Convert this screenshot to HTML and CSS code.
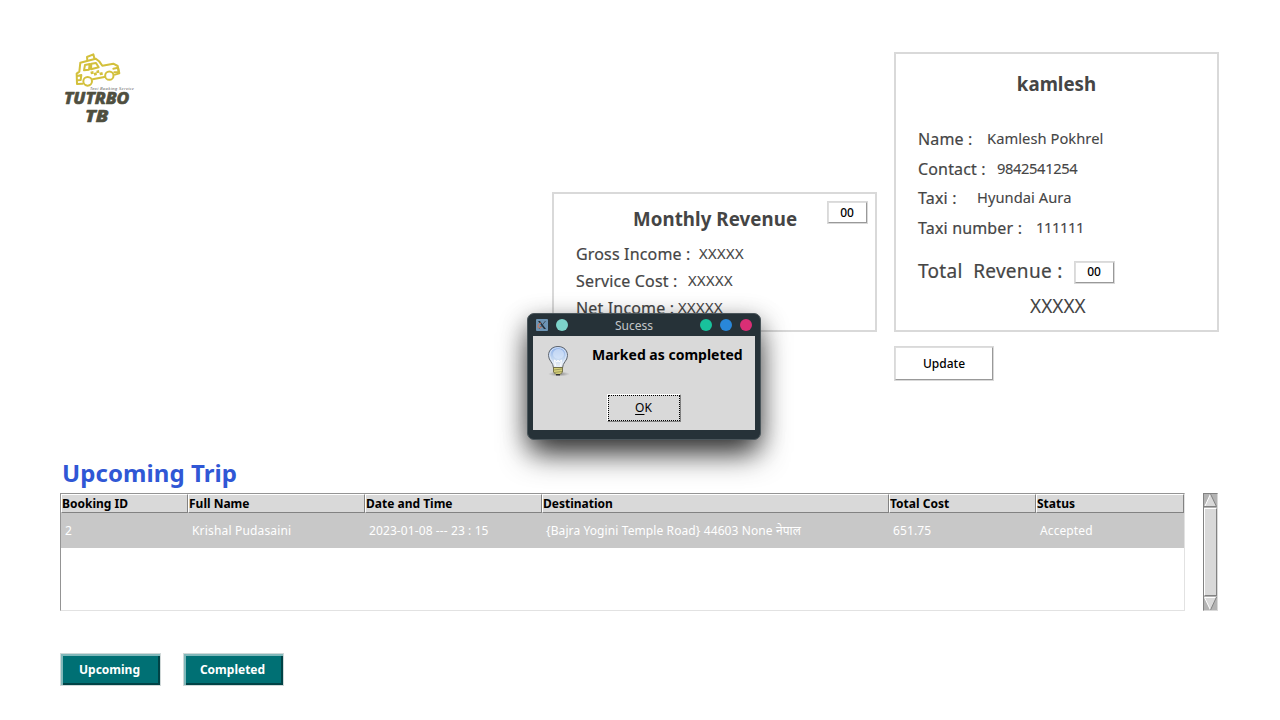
FILE: index.html
```html
<!DOCTYPE html>
<html lang="en">
<head>
<meta charset="utf-8">
<title>Tutrbo TB</title>
<link rel="stylesheet" href="styles.css">
</head>
<body>
<main class="app">
  <header class="top">
    <svg class="logo" viewBox="30 15 240 240">
      <g fill="none" stroke="#d3c03c" stroke-width="6" stroke-linejoin="round" stroke-linecap="round">
        <path d="M112 61L111 51L130 43L133 55"/>
        <path d="M98 131L81 132L80 101L88 95L91 68L137 56Q148 62 157 77L190 71L203 78L208 100L195 104"/>
        <path d="M105 75L102 91L117 89L119 72ZM124 71L138 69L146 82L123 88Z"/>
        <path d="M82 108L94 105L92 120L82 121M190 86L204 83L206 96L193 97M128 118L163 111"/>
        <circle cx="113" cy="124" r="13"/>
        <circle cx="178" cy="107" r="12.500"/>
      </g>
      <path fill="#d3c03c" d="M121 95l9-2 1 8-8 2zM131 99l8-2 2 8-8 2zM139 92l8-2 1 8-8 2zM148 98l9-2 2 8-9 2z"/>
      <text class="logo-tag" x="120" y="151" textLength="132">Taxi Booking Service</text>
      <text class="logo-name" x="42" y="192" textLength="196" lengthAdjust="spacingAndGlyphs">TUTRBO</text>
      <text class="logo-name" x="105" y="245" textLength="70" lengthAdjust="spacingAndGlyphs">TB</text>
    </svg>
    <section class="card revenue">
      <div class="revenue-head"><h2>Monthly Revenue</h2><button class="tk small">00</button></div>
      <div class="row"><span class="label w-gross">Gross Income :</span><span class="value masked">XXXXX</span></div>
      <div class="row"><span class="label w-service">Service Cost :</span><span class="value masked">XXXXX</span></div>
      <div class="row"><span class="label w-net">Net Income :</span><span class="value masked">XXXXX</span></div>
    </section>
    <div class="side">
      <section class="card profile">
        <h2>kamlesh</h2>
        <div class="row"><span class="label w-name">Name :</span><span class="value">Kamlesh Pokhrel</span></div>
        <div class="row"><span class="label w-contact">Contact :</span><span class="value digits">9842541254</span></div>
        <div class="row"><span class="label w-taxi">Taxi :</span><span class="value">Hyundai Aura</span></div>
        <div class="row"><span class="label w-number">Taxi number :</span><span class="value digits">111111</span></div>
        <div class="total"><span class="total-label">Total&nbsp; Revenue :</span><button class="tk small">00</button></div>
        <div class="total-value">XXXXX</div>
      </section>
      <button class="tk update">Update</button>
    </div>
  </header>
  <h1>Upcoming Trip</h1>
  <section class="trips">
    <div class="table">
      <div class="line head"><span>Booking ID</span><span>Full Name</span><span>Date and Time</span><span>Destination</span><span>Total Cost</span><span>Status</span></div>
      <div class="line item"><span>2</span><span class="name">Krishal Pudasaini</span><span>2023-01-08 --- 23 : 15</span><span>{Bajra Yogini Temple Road} 44603 None नेपाल</span><span>651.75</span><span>Accepted</span></div>
    </div>
    <div class="scroll">
      <svg width="13" height="13" viewBox="0 0 13 13"><path d="M6.5 0L1 12H12Z" fill="#d9d9d9"/><path d="M6.5 0L1 12" stroke="#fff"/><path d="M6.5 0L12.5 12.5H0" fill="none" stroke="#828282"/></svg>
      <div class="thumb"></div>
      <svg width="13" height="13" viewBox="0 0 13 13"><path d="M6.5 13L1 1H12Z" fill="#d9d9d9"/><path d="M12 .5H.5L6.5 13" fill="none" stroke="#fff"/><path d="M6.5 13L12.5 0" stroke="#828282"/></svg>
    </div>
  </section>
  <nav class="tabs"><button>Upcoming</button><button>Completed</button></nav>
</main>
<div class="dialog">
  <div class="title">
    <svg width="12" height="12" viewBox="0 0 12 12"><rect width="12" height="12" rx="1" fill="#6c94b4"/><path d="M2 2H4L10 10H8Z" fill="#26303a"/><path d="M9.500 2L3 10" stroke="#35404a" stroke-width=".8"/><path d="M5 4Q1.500 5 2 8Q4 10 5.500 8" fill="none" stroke="#c77b62" stroke-width="1.1"/></svg>
    <i class="dot pale"></i><span>Sucess</span><i class="dot green"></i><i class="dot blue"></i><i class="dot pink"></i>
  </div>
  <div class="content">
    <div class="message">
      <svg class="bulb" width="24" height="32" viewBox="0 0 24 32">
        <defs>
          <linearGradient id="glass" x2="0" y2="1"><stop stop-color="#86abe6"/><stop offset=".55" stop-color="#c3d7f1"/><stop offset="1" stop-color="#f2f2f2"/></linearGradient>
          <radialGradient id="shade"><stop stop-color="#555" stop-opacity=".7"/><stop offset="1" stop-color="#777" stop-opacity="0"/></radialGradient>
        </defs>
        <ellipse cx="13" cy="29" rx="11" ry="2.500" fill="url(#shade)"/>
        <path d="M12 1.500C6 1.500 2.500 5.500 2.500 10.500C2.500 16 7.500 17.500 7.500 23H16.500C16.500 17.500 21.500 16 21.500 10.500C21.500 5.500 18 1.500 12 1.500Z" fill="url(#glass)" stroke="#62676e"/>
        <path d="M12 2.700C7 2.700 3.800 6 3.800 10.500C3.800 15 8.500 17 8.800 21.500H15.200C15.500 17 20.200 15 20.200 10.500C20.200 6 17 2.700 12 2.700Z" fill="none" stroke="#e6effb" stroke-width=".8"/>
        <ellipse cx="12.500" cy="9" rx="5.500" ry="5" fill="#d8e6fa" opacity=".65"/>
        <path d="M9.500 21L8.500 15L11 17L12 15L13 17L15.500 15L14.500 21" fill="none" stroke="#fff"/>
        <path d="M7.500 22.500H16.500V27L14 29.500H10L7.500 27Z" fill="#d7d27a" stroke="#5f5c35" stroke-width=".8"/>
        <path d="M8 25L16 24M8 27.500L16 26.500" stroke="#8d8950" stroke-width=".8"/>
        <path d="M10 29.700H14" stroke="#303030" stroke-width="1.500"/>
      </svg>
      <strong>Marked as completed</strong>
    </div>
    <button class="ok"><u>O</u>K</button>
  </div>
</div>
</body>
</html>
```
FILE: styles.css
```css
* { box-sizing: border-box; }
body { margin: 0; background: #fff; color: #454545; font-family: "Noto Sans", sans-serif; font-size: 12px; overflow: hidden; }
h1, h2 { margin: 0; }
button { font: inherit; padding: 0; }
.app { width: 1280px; height: 720px; padding: 45px 61px 0 60px; }
.top { display: flex; height: 411px; }
.logo { width: 80px; height: 80px; margin-right: 412px; flex: none; overflow: visible; }
.logo-tag { font: italic 13px "Noto Sans", sans-serif; fill: #666; }
.logo-name { font: italic 800 50px "Noto Sans", sans-serif; fill: #4f4f3f; stroke: #4f4f3f; stroke-width: 2px; stroke-linejoin: round; }
.card { width: 325px; border: 2px solid #d9d9d9; padding-left: 22px; }
.revenue { height: 140px; margin: 147px 17px 0 0; padding-top: 7px; }
.revenue-head { display: flex; height: 39px; align-items: flex-start; }
h2 { font-size: 18.700px; line-height: 26px; font-weight: 700; }
.revenue h2 { margin: 5px 30px 0 57px; width: 164px; white-space: nowrap; letter-spacing: .07px; }
.tk { background: #fff; color: #000; border: 2px solid; border-color: #dedede #999 #999 #dedede; outline: 1px solid #d9d9d9; outline-offset: -1px; font-weight: 500; }
.small { width: 41px; height: 23px; line-height: 18px; padding-right: 1px; }
.row { display: flex; align-items: center; white-space: pre; }
.revenue .row { height: 27px; }
.label { font-size: 16px; flex: none; -webkit-text-stroke: .2px #454545; letter-spacing: .16px; }
.value { font-size: 14.700px; -webkit-text-stroke: .1px #454545; letter-spacing: .05px; margin-top: -2px; }
.revenue .value { letter-spacing: .4px; }
.profile .digits { letter-spacing: -.38px; }
.w-gross { width: 123px; }
.w-service { width: 112px; }
.w-net { width: 102px; }
.w-name { width: 69px; }
.w-contact { width: 79px; }
.w-taxi { width: 59px; }
.w-number { width: 118px; }
.side { margin-top: 7px; display: flex; flex-direction: column; gap: 14px; }
.profile { height: 280px; padding-top: 17px; }
.profile h2 { text-align: center; margin: 0 22px 27px 0; }
.profile .row { height: 29.700px; }
.total { display: flex; align-items: center; height: 49px; margin-top: 5px; }
.total-label { width: 156px; font-size: 19px; -webkit-text-stroke: .2px #454545; letter-spacing: .3px; white-space: nowrap; margin-top: -2px; }
.total-value { margin-left: 112px; font-size: 19px; line-height: 26px; margin-top: -4px; }
.update { width: 100px; height: 35px; }
h1 { margin-left: 2px; font-size: 24px; line-height: 34px; font-weight: 700; letter-spacing: .08px; color: #3057d5; }
.trips { display: flex; height: 118px; margin-top: 3px; gap: 18px; }
.table { width: 1125px; border: 1px solid #e2e2e2; border-top-color: #949494; border-left-color: #949494; }
.line { display: grid; grid-template-columns: 127px 177px 177px 347px 147px 148px; }
.head { height: 19px; color: #000; font-weight: 700; line-height: 18px; grid-template-rows: 19px; }
.head span { background: #d9d9d9; border: 1px solid; border-color: #fff #828282 #828282 #fff; }
.item { height: 35px; line-height: 35px; background: #c8c8c8; color: #fff; letter-spacing: .1px; }
.item span { padding-left: 4px; white-space: nowrap; }
.item .name { letter-spacing: .17px; }
.scroll { width: 15px; border: 1px solid #828282; border-right-color: #d9d9d9; border-bottom-color: #d9d9d9; background: #b3b3b3; display: flex; flex-direction: column; gap: 1px; }
.scroll svg { display: block; flex: none; }
.thumb { flex: 1; background: #d9d9d9; border: 1px solid; border-color: #fff #828282 #828282 #fff; }
.tabs { display: flex; gap: 22px; margin-top: 42px; }
.tabs button { width: 101px; height: 33px; border: 1px solid #d0d8d8; background: #007074; color: #fff; font-weight: 700; padding-right: 2px; box-shadow: inset 2px 2px #80b8ba, inset -2px -2px #004346; }
.dialog { position: absolute; left: 527px; top: 313px; width: 234px; height: 127px; background: #263238; border: 1px solid #4b565b; border-radius: 7px; padding: 0 5px 9px; box-shadow: 0 16px 30px -3px rgba(0,0,0,.78), 0 5px 24px rgba(0,0,0,.25); color: #000; }
.title { display: flex; height: 22px; align-items: center; padding: 0 3px; color: #c3c7c9; gap: 8px; }
.title span { flex: 1; text-align: center; }
.dot { width: 12px; height: 12px; border-radius: 50%; }
.pale { background: #7dd3ca; }
.green { background: #18c29c; }
.blue { background: #2987d9; }
.pink { background: #da2e75; }
.content { height: 94px; background: #d9d9d9; }
.message { display: flex; height: 58px; padding: 9px 13px; }
.bulb { flex: none; margin-right: 22px; }
.message strong { font-size: 14px; line-height: 20px; font-weight: 700; white-space: nowrap; }
.ok { display: block; width: 74px; height: 28px; margin-left: 74px; padding: 0 1px 2px 0; border: 1px solid; border-color: #fff #828282 #828282 #fff; outline: 1px dotted #000; outline-offset: -2px; background: #d9d9d9; color: #000; }
.ok u { text-underline-offset: 2px; }
```
